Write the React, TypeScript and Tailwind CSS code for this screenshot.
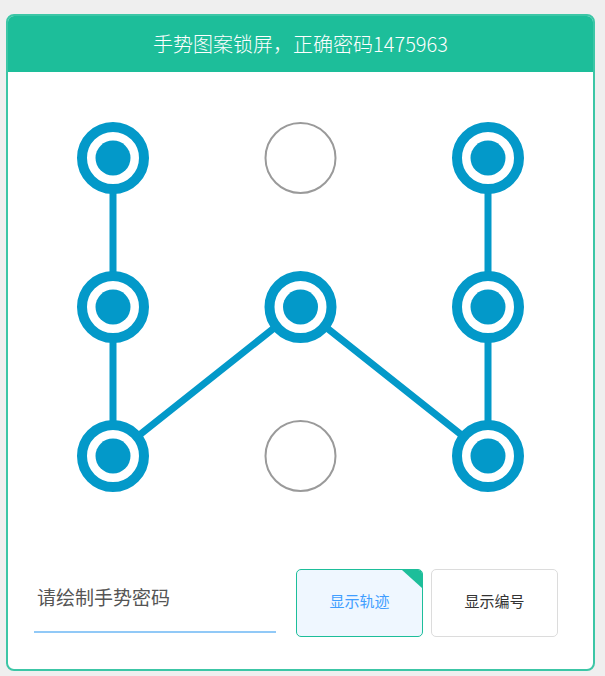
const BLUE = "#0399c9";

const points = [
  { x: 37, y: 37 },
  { x: 224.5, y: 37 },
  { x: 412, y: 37 },
  { x: 37, y: 186 },
  { x: 224.5, y: 186 },
  { x: 412, y: 186 },
  { x: 37, y: 335 },
  { x: 224.5, y: 335 },
  { x: 412, y: 335 },
];

// password 1475963, indexes are 1-based
const path = [1, 4, 7, 5, 9, 6, 3];

const Pattern = () => {
  const line = path.map((n) => `${points[n - 1].x},${points[n - 1].y}`).join(" ");
  return (
    <svg width="449" height="372" viewBox="0 0 449 372">
      <polyline points={line} fill="none" stroke={BLUE} strokeWidth="7" strokeLinejoin="round" />
      {points.map((p, i) =>
        path.includes(i + 1) ? (
          <g key={i}>
            <circle cx={p.x} cy={p.y} r="31" fill="#fff" stroke={BLUE} strokeWidth="10" />
            <circle cx={p.x} cy={p.y} r="17.5" fill={BLUE} />
          </g>
        ) : (
          <circle key={i} cx={p.x} cy={p.y} r="35" fill="#fff" stroke="#9a9a9a" strokeWidth="2" />
        )
      )}
    </svg>
  );
};

export default function App() {
  return (
    <div
      className="min-h-[676px] w-[605px] bg-[#efefef] pt-[14px] pl-[6px]"
      style={{ fontFamily: '"Noto Sans CJK SC", "Noto Sans", sans-serif' }}
    >
      <div className="flex h-[657px] w-[589px] flex-col overflow-hidden rounded-[8px] border-2 border-[#3cc6a6] bg-white">
        <div className="flex h-[56px] shrink-0 items-center justify-center bg-[#1dbe9a] pb-[1px] text-[20px] font-light text-white">
          手势图案锁屏，正确密码1475963
        </div>
        <div className="flex justify-center pt-[49px]">
          <Pattern />
        </div>
        <div className="mt-[76px] flex items-start pl-[26px]">
          <div className="flex h-[64px] w-[242px] items-center border-b-2 border-[#91c9f7] pb-[6px] pl-[3px] text-[19px] text-[#555]">
            请绘制手势密码
          </div>
          <button className="relative ml-[20px] flex h-[68px] w-[127px] items-center justify-center overflow-hidden rounded-[5px] border border-[#1dbe9a] bg-[#eff7ff] pb-[3px] text-[15px] text-[#409eff]">
            显示轨迹
            <span className="absolute top-0 right-0 h-0 w-0 border-t-[18px] border-l-[20px] border-t-[#1dbe9a] border-l-transparent" />
          </button>
          <button className="ml-[8px] flex h-[68px] w-[127px] items-center justify-center rounded-[5px] border border-[#dcdcdc] bg-white pb-[3px] text-[15px] text-[#333]">
            显示编号
          </button>
        </div>
      </div>
    </div>
  );
}
